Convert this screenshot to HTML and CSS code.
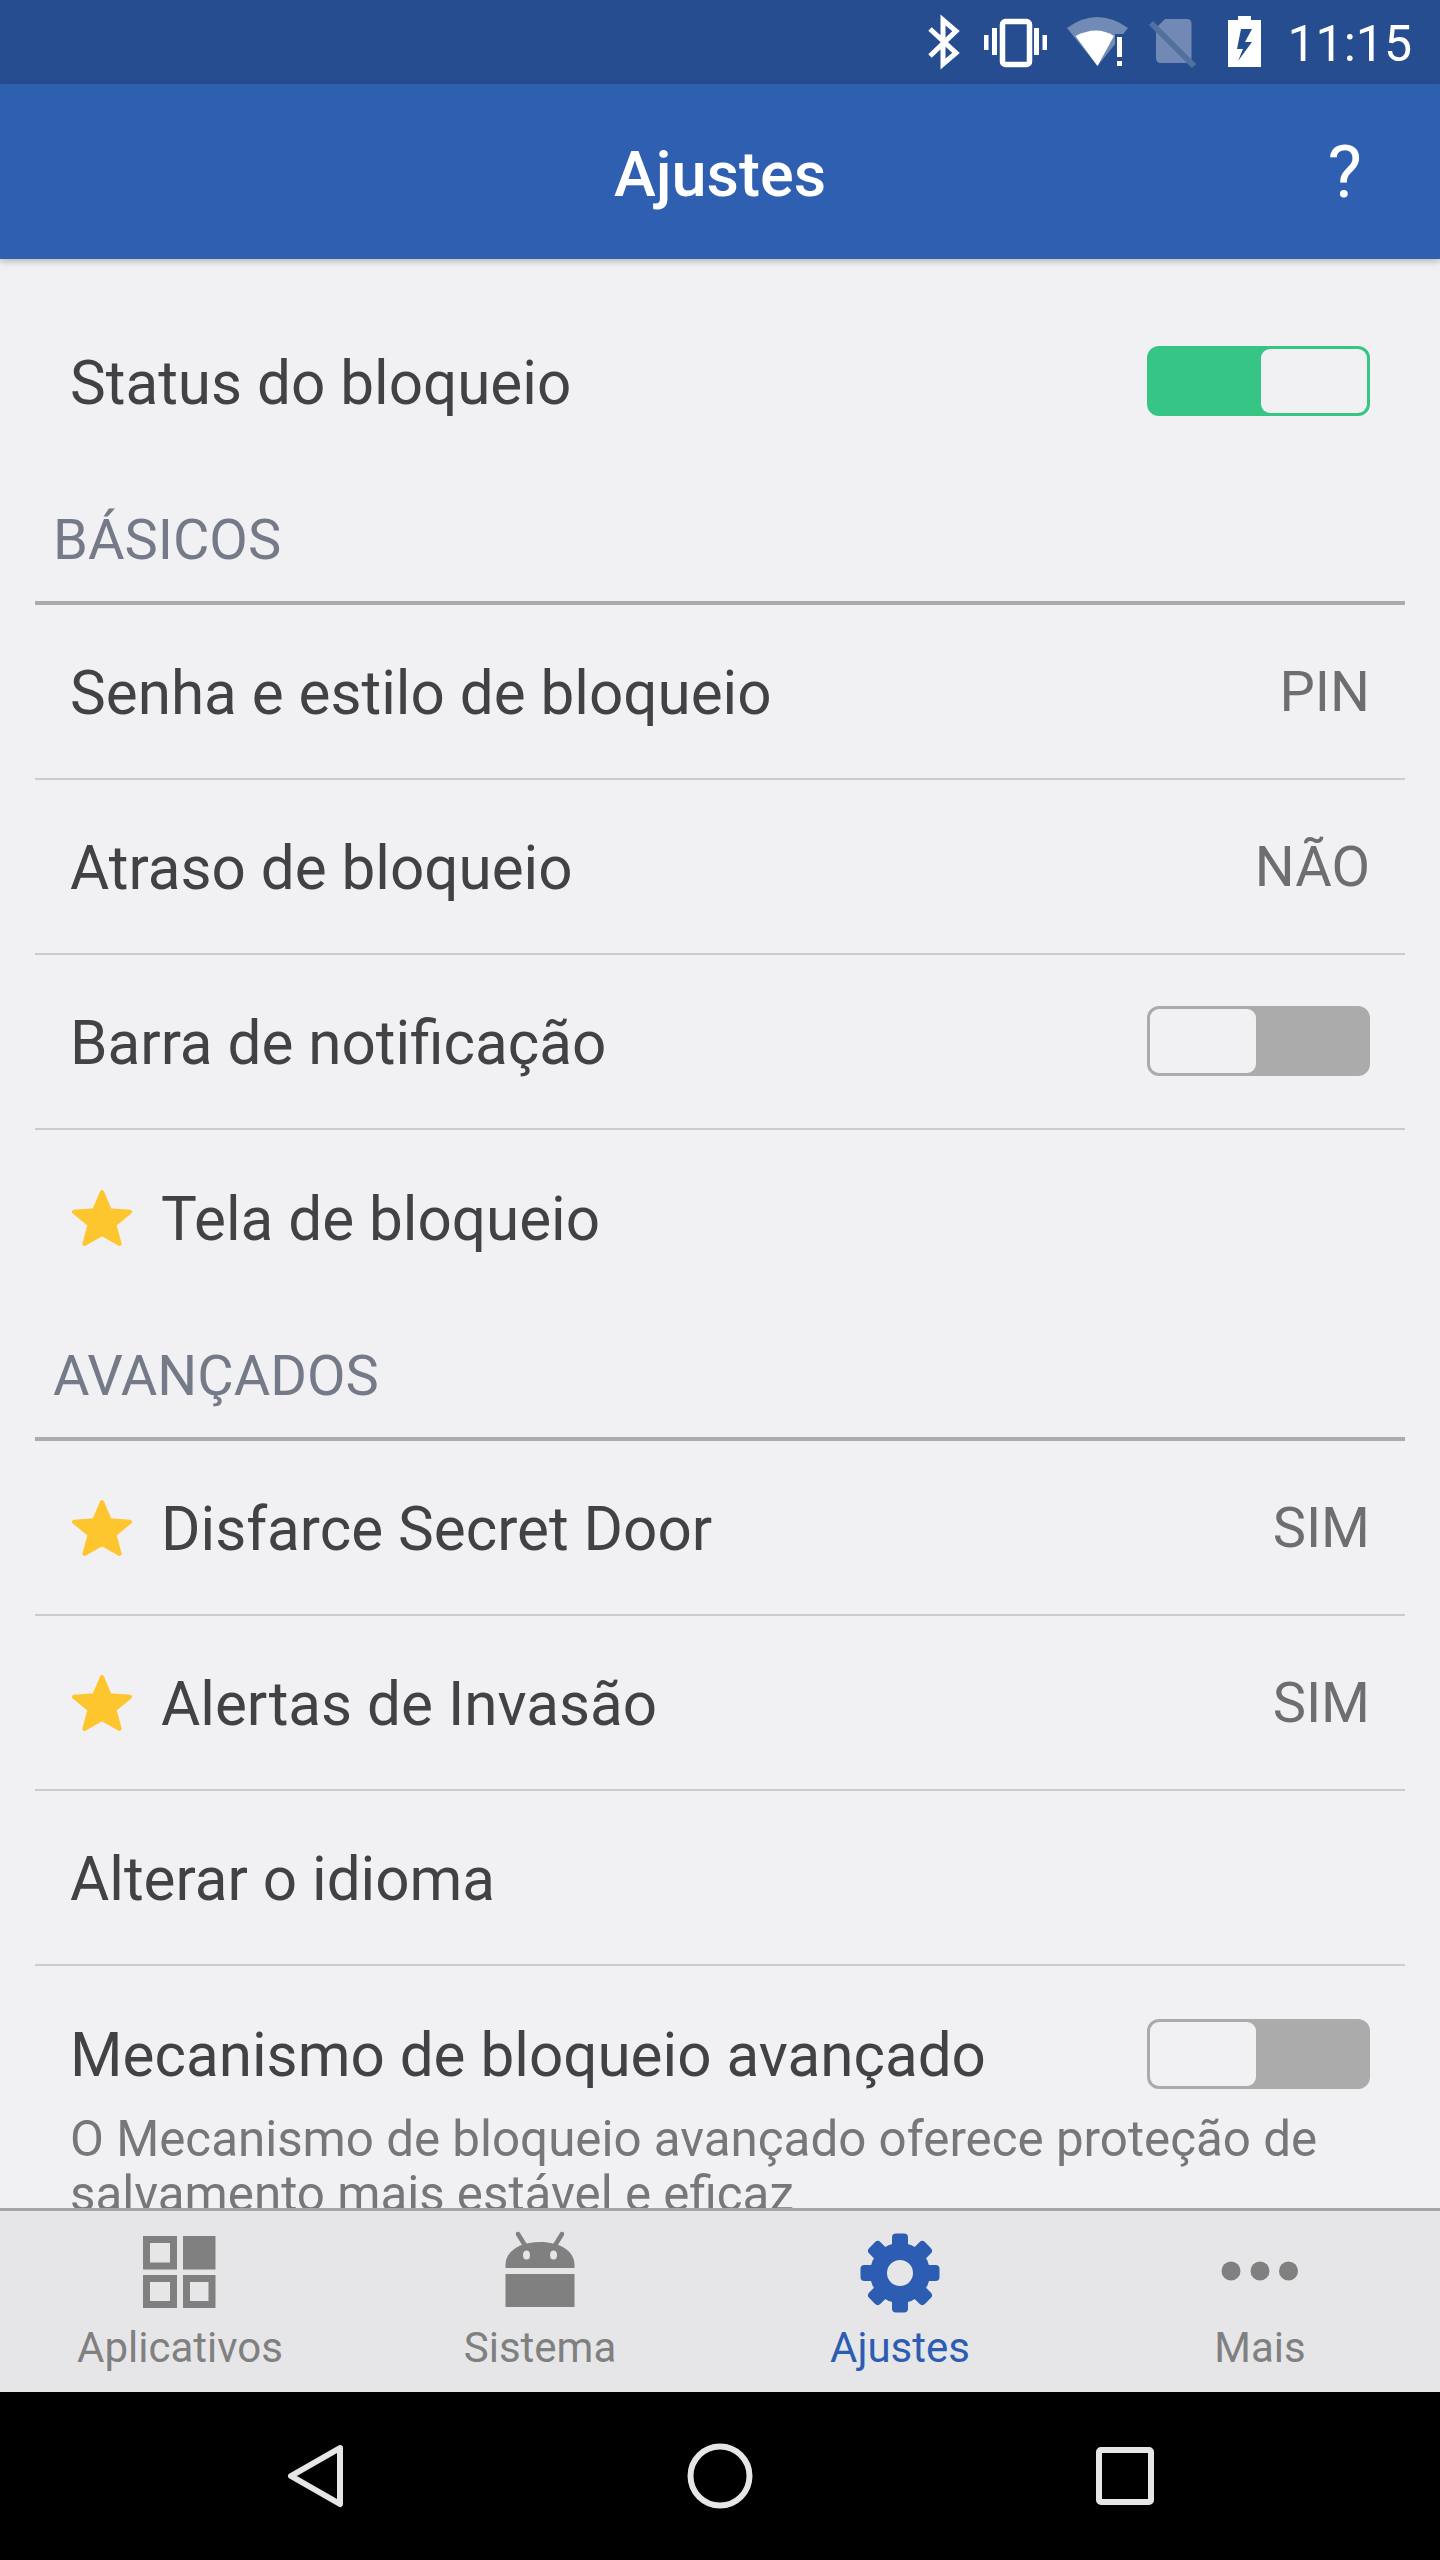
FILE: index.html
```html
<!DOCTYPE html>
<html lang="pt">
<head>
<meta charset="utf-8">
<title>Ajustes</title>
<link rel="stylesheet" href="styles.css">
</head>
<body>
<div class="app">
  <div class="statusbar">
    <svg class="status-icons" width="334" height="84" viewBox="928 0 334 84">
      <path d="M931 29 L957 53 L944 64 V20 L957 31 L931 56" fill="none" stroke="#fff" stroke-width="5"/>
      <g fill="#fff">
        <rect x="985" y="35" width="4.5" height="15"/>
        <rect x="993" y="28" width="5" height="27"/>
        <rect x="1035" y="28" width="5" height="27"/>
        <rect x="1043.5" y="35" width="4.5" height="15"/>
      </g>
      <rect x="1003.5" y="21.5" width="27" height="43" rx="3" fill="none" stroke="#fff" stroke-width="5.5"/>
      <path d="M1068 28 Q1098 6 1129 28 L1098.5 66 Z" fill="#fff" opacity=".35"/>
      <path d="M1076.500 36 Q1098 25 1115 36 L1098.500 66 Z" fill="#fff"/>
      <rect x="1116" y="34" width="10" height="34" fill="#264d8f"/>
      <rect x="1118" y="37" width="5" height="20" fill="#fff"/>
      <rect x="1118" y="61" width="5" height="5" fill="#fff"/>
      <path d="M1166 19 H1188 Q1192.500 19 1192.500 24 V58 Q1192.500 63 1188 63 H1162 Q1157 63 1157 58 V28 Z" fill="#7289b5"/>
      <path d="M1152 23 L1195 66" stroke="#53719f" stroke-width="6" fill="none"/>
      <path d="M1239 16 H1252 V20 H1262 V67 H1229 V20 H1239 Z" fill="#fff"/>
      <path d="M1253 29 H1242 L1238 49 H1244 L1239 61 L1253 42 H1246 Z" fill="#264d8f"/>
    </svg>
    <span class="clock">11:15</span>
  </div>

  <header class="appbar">
    <h1 class="appbar-title">Ajustes</h1>
    <span class="appbar-help">?</span>
  </header>

  <main class="content">
    <div class="row row-plain">
      <span class="row-title">Status do bloqueio</span>
      <span class="toggle toggle-on"><span class="knob"></span></span>
    </div>

    <h2 class="section">BÁSICOS</h2>
    <div class="row">
      <span class="row-title">Senha e estilo de bloqueio</span>
      <span class="row-value">PIN</span>
    </div>
    <div class="row">
      <span class="row-title">Atraso de bloqueio</span>
      <span class="row-value">NÃO</span>
    </div>
    <div class="row">
      <span class="row-title">Barra de notificação</span>
      <span class="toggle toggle-off"><span class="knob"></span></span>
    </div>
    <div class="row row-plain">
      <span class="row-title">
        <svg class="star" viewBox="1 1 58 54"><path d="M30 3 L37.500 20.500 L57 22 L42 34.500 L47 53 L30 43.500 L13 53 L18 34.500 L3 22 L22.500 20.500 Z" fill="#fec62e" stroke="#fec62e" stroke-width="4" stroke-linejoin="round"/></svg>
        Tela de bloqueio
      </span>
    </div>

    <h2 class="section">AVANÇADOS</h2>
    <div class="row">
      <span class="row-title">
        <svg class="star" viewBox="1 1 58 54"><path d="M30 3 L37.500 20.500 L57 22 L42 34.500 L47 53 L30 43.500 L13 53 L18 34.500 L3 22 L22.500 20.500 Z" fill="#fec62e" stroke="#fec62e" stroke-width="4" stroke-linejoin="round"/></svg>
        Disfarce Secret Door
      </span>
      <span class="row-value">SIM</span>
    </div>
    <div class="row">
      <span class="row-title">
        <svg class="star" viewBox="1 1 58 54"><path d="M30 3 L37.500 20.500 L57 22 L42 34.500 L47 53 L30 43.500 L13 53 L18 34.500 L3 22 L22.500 20.500 Z" fill="#fec62e" stroke="#fec62e" stroke-width="4" stroke-linejoin="round"/></svg>
        Alertas de Invasão
      </span>
      <span class="row-value">SIM</span>
    </div>
    <div class="row">
      <span class="row-title">Alterar o idioma</span>
    </div>
    <div class="row-tall">
      <div class="row-tall-head">
        <span class="row-title">Mecanismo de bloqueio avançado</span>
        <span class="toggle toggle-off"><span class="knob"></span></span>
      </div>
      <p class="row-desc">O Mecanismo de bloqueio avançado oferece proteção de salvamento mais estável e eficaz</p>
    </div>
  </main>

  <nav class="tabs">
    <div class="tab">
      <svg class="tab-icon" viewBox="0 0 90 90">
        <g fill="none" stroke="#808080" stroke-width="7">
          <rect x="11.500" y="9.500" width="27" height="26.500"/>
          <rect x="11.500" y="48.500" width="27" height="26"/>
          <rect x="51.500" y="48.500" width="25.500" height="26"/>
        </g>
        <rect x="48" y="6" width="32.500" height="33.500" fill="#808080"/>
      </svg>
      <span class="tab-label">Aplicativos</span>
    </div>
    <div class="tab">
      <svg class="tab-icon" viewBox="0 0 90 90">
        <path d="M10.500 38 V35 C10.500 21 25 12 45 12 C65 12 79.500 21 79.500 35 V38 Z" fill="#808080"/>
        <path d="M23 4 L31 17 M67 4 L59 17" stroke="#808080" stroke-width="4.500" stroke-linecap="round"/>
        <ellipse cx="31.500" cy="25" rx="3.500" ry="4.500" fill="#e6e6e9"/>
        <ellipse cx="58.500" cy="25" rx="3.500" ry="4.500" fill="#e6e6e9"/>
        <rect x="10.500" y="44" width="69" height="33" fill="#808080"/>
      </svg>
      <span class="tab-label">Sistema</span>
    </div>
    <div class="tab tab-active">
      <svg class="tab-icon" viewBox="-45 -43 90 90">
        <g fill="#2c5db2">
          <rect x="-8" y="-39.500" width="16" height="18" rx="4"/>
          <rect x="-8" y="-39.500" width="16" height="18" rx="4" transform="rotate(45)"/>
          <rect x="-8" y="-39.500" width="16" height="18" rx="4" transform="rotate(90)"/>
          <rect x="-8" y="-39.500" width="16" height="18" rx="4" transform="rotate(135)"/>
          <rect x="-8" y="-39.500" width="16" height="18" rx="4" transform="rotate(180)"/>
          <rect x="-8" y="-39.500" width="16" height="18" rx="4" transform="rotate(225)"/>
          <rect x="-8" y="-39.500" width="16" height="18" rx="4" transform="rotate(270)"/>
          <rect x="-8" y="-39.500" width="16" height="18" rx="4" transform="rotate(315)"/>
        </g>
        <circle r="21.500" fill="none" stroke="#2c5db2" stroke-width="17"/>
      </svg>
      <span class="tab-label">Ajustes</span>
    </div>
    <div class="tab">
      <svg class="tab-icon" viewBox="0 0 90 90">
        <circle cx="16" cy="41" r="9.500" fill="#808080"/>
        <circle cx="45" cy="41" r="9.500" fill="#808080"/>
        <circle cx="73.500" cy="41" r="9.500" fill="#808080"/>
      </svg>
      <span class="tab-label">Mais</span>
    </div>
  </nav>

  <div class="navbar">
    <svg class="nav-icon" viewBox="0 0 70 70"><path d="M60 7 L11 35 L60 63 Z" fill="none" stroke="#e6e6e6" stroke-width="6" stroke-linejoin="round"/></svg>
    <svg class="nav-icon" viewBox="0 0 70 70"><circle cx="35" cy="35" r="29.500" fill="none" stroke="#e6e6e6" stroke-width="6"/></svg>
    <svg class="nav-icon" viewBox="0 0 70 70"><rect x="9" y="9" width="52" height="52" rx="2" fill="none" stroke="#e6e6e6" stroke-width="6"/></svg>
  </div>
</div>
</body>
</html>
```

FILE: styles.css
```css
* { box-sizing: border-box; }
html, body { margin: 0; padding: 0; }
body { font-family: Roboto, "Noto Sans", sans-serif; background: #000; }

.app {
  width: 1440px;
  height: 2560px;
  display: flex;
  flex-direction: column;
  overflow: hidden;
}

.statusbar {
  flex: 0 0 84px;
  height: 84px;
  background: #264d8f;
  display: flex;
  align-items: center;
  justify-content: flex-end;
  padding-right: 28px;
  gap: 26px;
}
.status-icons { display: block; }
.clock { color: #fff; font-size: 50px; line-height: 60px; font-weight: 400; margin-top: 4px; }

.appbar {
  flex: 0 0 175px;
  background: #2e5fb1;
  position: relative;
  z-index: 2;
  display: flex;
  align-items: center;
  justify-content: center;
  box-shadow: 0 3px 6px rgba(0, 0, 0, .22);
}
.appbar-title { margin: 0; padding-top: 6px; color: #fff; font-size: 63px; font-weight: 500; }
.appbar-help {
  position: absolute;
  right: 78px;
  top: 50%;
  transform: translateY(-50%);
  color: #fff;
  font-size: 73px;
}

.content {
  flex: 1 1 0;
  min-height: 0;
  overflow: hidden;
  background: #f1f1f4;
  padding: 35px 35px 0;
}

.row {
  height: 175px;
  padding: 0 35px;
  display: flex;
  align-items: center;
  justify-content: space-between;
  border-bottom: 2px solid #cbcbce;
}
.row-plain { border-bottom: 0; }

.row-title {
  color: #424244;
  font-size: 60.2px;
  display: flex;
  align-items: center;
  gap: 29px;
  padding-top: 3px;
}
.row-value { color: #6e6e70; font-size: 56px; }

.star { width: 60px; height: 56px; flex: none; margin: -3px 0 0 2px; }

.section {
  height: 136px;
  margin: 0;
  padding: 0 18px 28px;
  display: flex;
  align-items: flex-end;
  color: #747a88;
  font-size: 56px;
  line-height: 66px;
  font-weight: 400;
  border-bottom: 4px solid #ababae;
}

.toggle {
  width: 223px;
  height: 70px;
  margin-top: -1px;
  border-radius: 12px;
  border: 3px solid;
  display: flex;
  flex: none;
}
.toggle-on { background: #37c586; border-color: #37c586; justify-content: flex-end; }
.toggle-off { background: #ababab; border-color: #ababab; justify-content: flex-start; }
.knob { width: 106px; height: 100%; background: #f1f1f4; border-radius: 9px; }

.row-tall { padding: 30px 35px 0; }
.row-tall-head { height: 116px; display: flex; align-items: center; justify-content: space-between; }
.row-desc { margin: 0; color: #777779; font-size: 49.300px; line-height: 55px; }

.tabs {
  flex: 0 0 184px;
  background: #e6e6e9;
  border-top: 3px solid #a5a5a7;
  display: grid;
  grid-template-columns: repeat(4, 360px);
}
.tab { display: flex; flex-direction: column; align-items: center; color: #808080; }
.tab-active { color: #2c5db2; }
.tab-icon { width: 90px; height: 90px; margin-top: 19px; display: block; }
.tab-label { font-size: 42px; line-height: 50px; margin-top: 3px; }

.navbar {
  flex: 0 0 168px;
  background: #000;
  display: flex;
  align-items: center;
  padding: 0 280px 0 280px;
  justify-content: space-between;
}
.nav-icon { width: 70px; height: 70px; display: block; }
```
